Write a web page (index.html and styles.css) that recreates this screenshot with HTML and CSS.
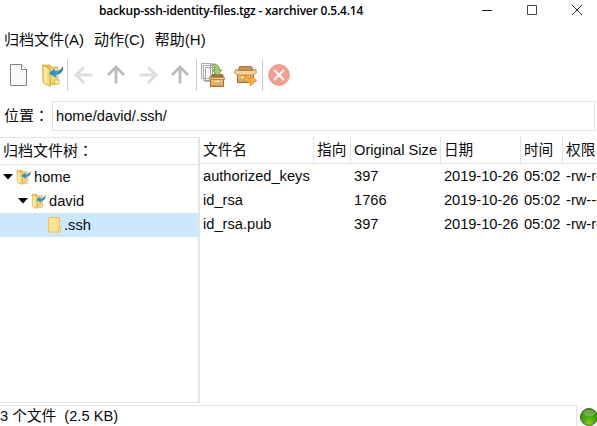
FILE: index.html
```
<!DOCTYPE html>
<html lang="zh-CN">
<head>
<meta charset="utf-8">
<title>xarchiver</title>
<link rel="stylesheet" href="styles.css">
</head>
<body>
<svg class="defs" width="0" height="0">
  <defs>
    <linearGradient id="gold" x1="0" x2="1"><stop offset="0" stop-color="#e9bd4a"/><stop offset=".3" stop-color="#fff0a8"/><stop offset="1" stop-color="#f0cb5c"/></linearGradient>
    <linearGradient id="blue" x1="0" x2="1"><stop offset="0" stop-color="#1688d0"/><stop offset=".6" stop-color="#2ba3e6"/><stop offset="1" stop-color="#27688f"/></linearGradient>
    <linearGradient id="box" x1="0" x2="0" y1="0" y2="1"><stop offset="0" stop-color="#efc882"/><stop offset="1" stop-color="#d39c4a"/></linearGradient>
    <radialGradient id="led" cx=".5" cy=".85" r=".8"><stop offset="0" stop-color="#6ed51a"/><stop offset=".5" stop-color="#49a60c"/><stop offset="1" stop-color="#3b8410"/></radialGradient>
    <symbol id="open" viewBox="0 0 24 24">
      <path d="M2 2h7l1 2h7v17L5 22Z" fill="#e8bd50" stroke="#d2a136" stroke-width=".6"/>
      <path d="M10 5h6.500v15h-6.500z" fill="#f5d877"/>
      <path d="M1.500 2 9 6 9.500 23.500 2 20Z" fill="url(#gold)" stroke="#d3a33a" stroke-width=".7"/>
      <path d="M13.500 17h4.500v4h-4.500z" fill="#fff0af" stroke="#d6a43a" stroke-width=".7"/>
      <path d="M8 10.500 13.500 5.500 14 8C18 8.500 20.500 6 22 3 22.500 8 19.500 12 15 12L15.500 15Z" fill="url(#blue)"/>
    </symbol>
    <symbol id="arrow" viewBox="0 0 20 20"><path d="M18.500 10H2.500M10 2 2 10l8 8" fill="none" stroke="currentColor" stroke-width="2.800"/></symbol>
  </defs>
</svg>
<div class="window">
  <header class="titlebar">
    <h1 class="title">backup-ssh-identity-files.tgz - xarchiver 0.5.4.14</h1>
    <div class="controls">
      <svg width="10" height="10" shape-rendering="crispEdges"><path d="M0 5.500h10" stroke="#222"/></svg>
      <svg width="10" height="10"><path d="M.5.5h9v9h-9z" fill="none" stroke="#444"/></svg>
      <svg width="10" height="10"><path d="M0 0 10 10M10 0 0 10" stroke="#333"/></svg>
    </div>
  </header>
  <nav class="menu"><span>归档文件(A)</span><span>动作(C)</span><span>帮助(H)</span></nav>
  <div class="toolbar">
    <svg class="new" width="17" height="22" viewBox="0 0 17 22"><path d="M.5.5h11l5 5v16H.5z" fill="#f8f9fa" stroke="#7c8183"/><path d="M11.500.5v5h5" fill="#fff" stroke="#7c8183"/></svg>
    <svg class="folder" width="24" height="24"><use href="#open"/></svg>
    <i class="sep"></i>
    <div class="arrows">
      <svg class="pale" width="20" height="20"><use href="#arrow"/></svg>
      <svg class="up" width="20" height="20"><use href="#arrow"/></svg>
      <svg class="pale right" width="20" height="20"><use href="#arrow"/></svg>
      <svg class="up" width="20" height="20"><use href="#arrow"/></svg>
    </div>
    <i class="sep"></i>
    <svg class="add" width="24" height="24" viewBox="0 0 24 24">
      <g fill="#fafafa" stroke="#a0a0a0" stroke-width=".9"><path d="M.5.5h9v15h-9zM2.500 2.500h9v15h-9zM4.500 4.500h9v14h-9z"/></g>
      <path d="M11 11.500h10.500l1.500 4H9.500z" fill="#a8722a" stroke="#8a5b1d" stroke-width=".8"/>
      <path d="M9.500 16.500h13v7h-13z" fill="url(#box)" stroke="#94662a" stroke-width=".9"/>
      <path d="M8.500 14.500h15v2h-15z" fill="#f2d298" stroke="#a9783a" stroke-width=".7"/><path d="M14 18.500h4" stroke="#fff4dc"/>
      <path d="M10.500 1C16 .5 18.500 3 18.500 7H21l-4.500 5.500L11 7h3c0-3-1-4.500-3.500-6z" fill="#a3ca74" stroke="#6b9a3d" stroke-width=".9"/>
    </svg>
    <svg class="extract" width="24" height="20" viewBox="0 0 24 20">
      <path d="M4 4.500 5.500.5h12l2 4z" fill="#c8924a" stroke="#9a6628" stroke-width=".8"/>
      <path d="M3.500 7.500h16v9h-16z" fill="url(#box)" stroke="#94662a" stroke-width=".9"/>
      <path d="M3.500 4.500h16l2-1.500 1 3.500-3 2.500H3.500l-3-2L2 3z" fill="#f3d49e" stroke="#a9783a" stroke-width=".8"/>
      <path d="M7 11.500h5" stroke="#fff4dc"/>
      <path d="M11.500 9c0 2.500 2 3.500 5 3.500v-3l6 5-6 5v-3c-4.500 0-7.500-2.500-5-7.500z" fill="#ffb04a" stroke="#ea820f" stroke-width=".9"/>
    </svg>
    <i class="sep"></i>
    <svg class="stop" width="22" height="22" viewBox="0 0 22 22"><circle cx="11" cy="11" r="10.400" fill="#f79b8c" stroke="#d3a49c"/><path d="m6 6 10 10M16 6 6 16" stroke="#fff" stroke-width="2.200"/></svg>
  </div>
  <div class="location"><label>位置<span class="colon" lang="zh-TW">：</span></label><div class="entry">home/david/.ssh/</div></div>
  <main class="panes">
    <section class="tree">
      <div class="tree-head">归档文件树<span class="colon" lang="zh-TW">：</span></div>
      <div class="node"><svg class="tri" width="10" height="6"><path d="M0 0h10L5 5.500z"/></svg><svg width="16" height="16"><use href="#open"/></svg><span>home</span></div>
      <div class="node level2"><svg class="tri" width="10" height="6"><path d="M0 0h10L5 5.500z"/></svg><svg width="16" height="16"><use href="#open"/></svg><span>david</span></div>
      <div class="node level3"><svg width="14" height="16"><path d="M.5.5h11v9.500h1v5H.5z" fill="#ffe391" stroke="#eac653"/><path d="M10.500 15v-5h1.500" fill="none" stroke="#eac140"/></svg><span>.ssh</span></div>
    </section>
    <section class="files">
      <div class="row head"><span>文件名</span><span>指向</span><span>Original Size</span><span>日期</span><span>时间</span><span>权限</span></div>
      <div class="row"><span>authorized_keys</span><span></span><span>397</span><span>2019-10-26</span><span>05:02</span><span>-rw-r--r--</span></div>
      <div class="row"><span>id_rsa</span><span></span><span>1766</span><span>2019-10-26</span><span>05:02</span><span>-rw-------</span></div>
      <div class="row"><span>id_rsa.pub</span><span></span><span>397</span><span>2019-10-26</span><span>05:02</span><span>-rw-r--r--</span></div>
    </section>
  </main>
  <footer class="status">
    <div class="message">3 个文件&nbsp; (2.5 KB)</div>
    <svg width="18" height="18" viewBox="0 0 18 18"><circle cx="9" cy="9" r="8.500" fill="url(#led)" stroke="#476b31"/><ellipse cx="9" cy="5" rx="6" ry="3.500" fill="#fff" opacity=".22"/></svg>
  </footer>
</div>
</body>
</html>
```
FILE: styles.css
```
* { box-sizing: border-box; }
body { margin: 0; background: #fff; color: #0a0a0a; font: 14.67px/24px "Liberation Sans", "Noto Sans CJK SC", sans-serif; overflow: hidden; }
svg { display: block; flex: none; }
.defs { position: absolute; }
.window { width: 597px; height: 426px; display: flex; flex-direction: column; overflow: hidden; white-space: nowrap; }
.titlebar { height: 22px; flex: none; display: flex; justify-content: space-between; padding-left: 99px; }
.title { margin: 0; font: 600 12px/22px "Open Sans", sans-serif; letter-spacing: -0.19px; color: #000; }
.controls { display: flex; gap: 35px; padding: 5px 15px 0 0; }
.menu { height: 37px; flex: none; display: flex; gap: 10px; padding: 6px 4px 0; font-size: 15px; }
.toolbar { height: 32px; flex: none; display: flex; align-items: center; padding-left: 10px; }
.new { margin-right: 14px; }
.folder { margin-right: 2px; }
.sep { width: 1px; height: 32px; background: #ccc; }
.arrows { display: flex; gap: 12px; margin: 0 6px; }
.pale { color: #ddd; }
.up { color: #bbb; transform: rotate(90deg); }
.right { transform: rotate(180deg); }
.add { margin: 0 9px 0 4px; }
.extract { margin: 2px 4px 0 0; }
.stop { margin-left: 5px; }
.location { height: 46px; flex: none; display: flex; padding: 10px 2px 6px 4px; }
.location label { width: 48px; line-height: 30px; font-size: 15px; }
.colon { font-family: "Noto Sans CJK TC", sans-serif; line-height: 1; }
.entry { flex: 1; border: 1px solid #e2e2e2; padding-left: 3px; line-height: 28px; }
.panes { height: 266px; flex: none; display: flex; }
.tree { width: 200px; border-right: 2px solid #e4e4e4; border-bottom: 1px solid #e2e2e2; }
.tree-head { height: 28px; padding-left: 3px; line-height: 26px; font-size: 15px; border: solid #e2e2e2; border-width: 1px 0; }
.node { height: 24px; display: flex; align-items: center; padding-left: 3px; }
.node span { padding-left: 2px; }
.tri { margin-right: 3px; }
.level2 { padding-left: 18px; }
.level3 { padding-left: 48px; background: #cce8ff; }
.files { flex: 1; overflow: hidden; }
.row { display: grid; grid-template-columns: 114px 37px 90px 80px 42px 80px; height: 24px; }
.row span { padding-left: 3px; }
.row span:nth-child(4), .row span:nth-child(5) { letter-spacing: -0.06px; }
.head { height: 27px; line-height: 26px; border-bottom: 1px solid #e2e2e2; }
.head span { border-right: 1px solid #e2e2e2; }
.status { height: 21px; margin-top: 2px; flex: none; display: flex; gap: 3px; }
.message { width: 577px; flex: none; border: solid #e2e2e2; border-width: 1px 1px 0 0; line-height: 21px; }
.status svg { margin-top: 3px; }
```
